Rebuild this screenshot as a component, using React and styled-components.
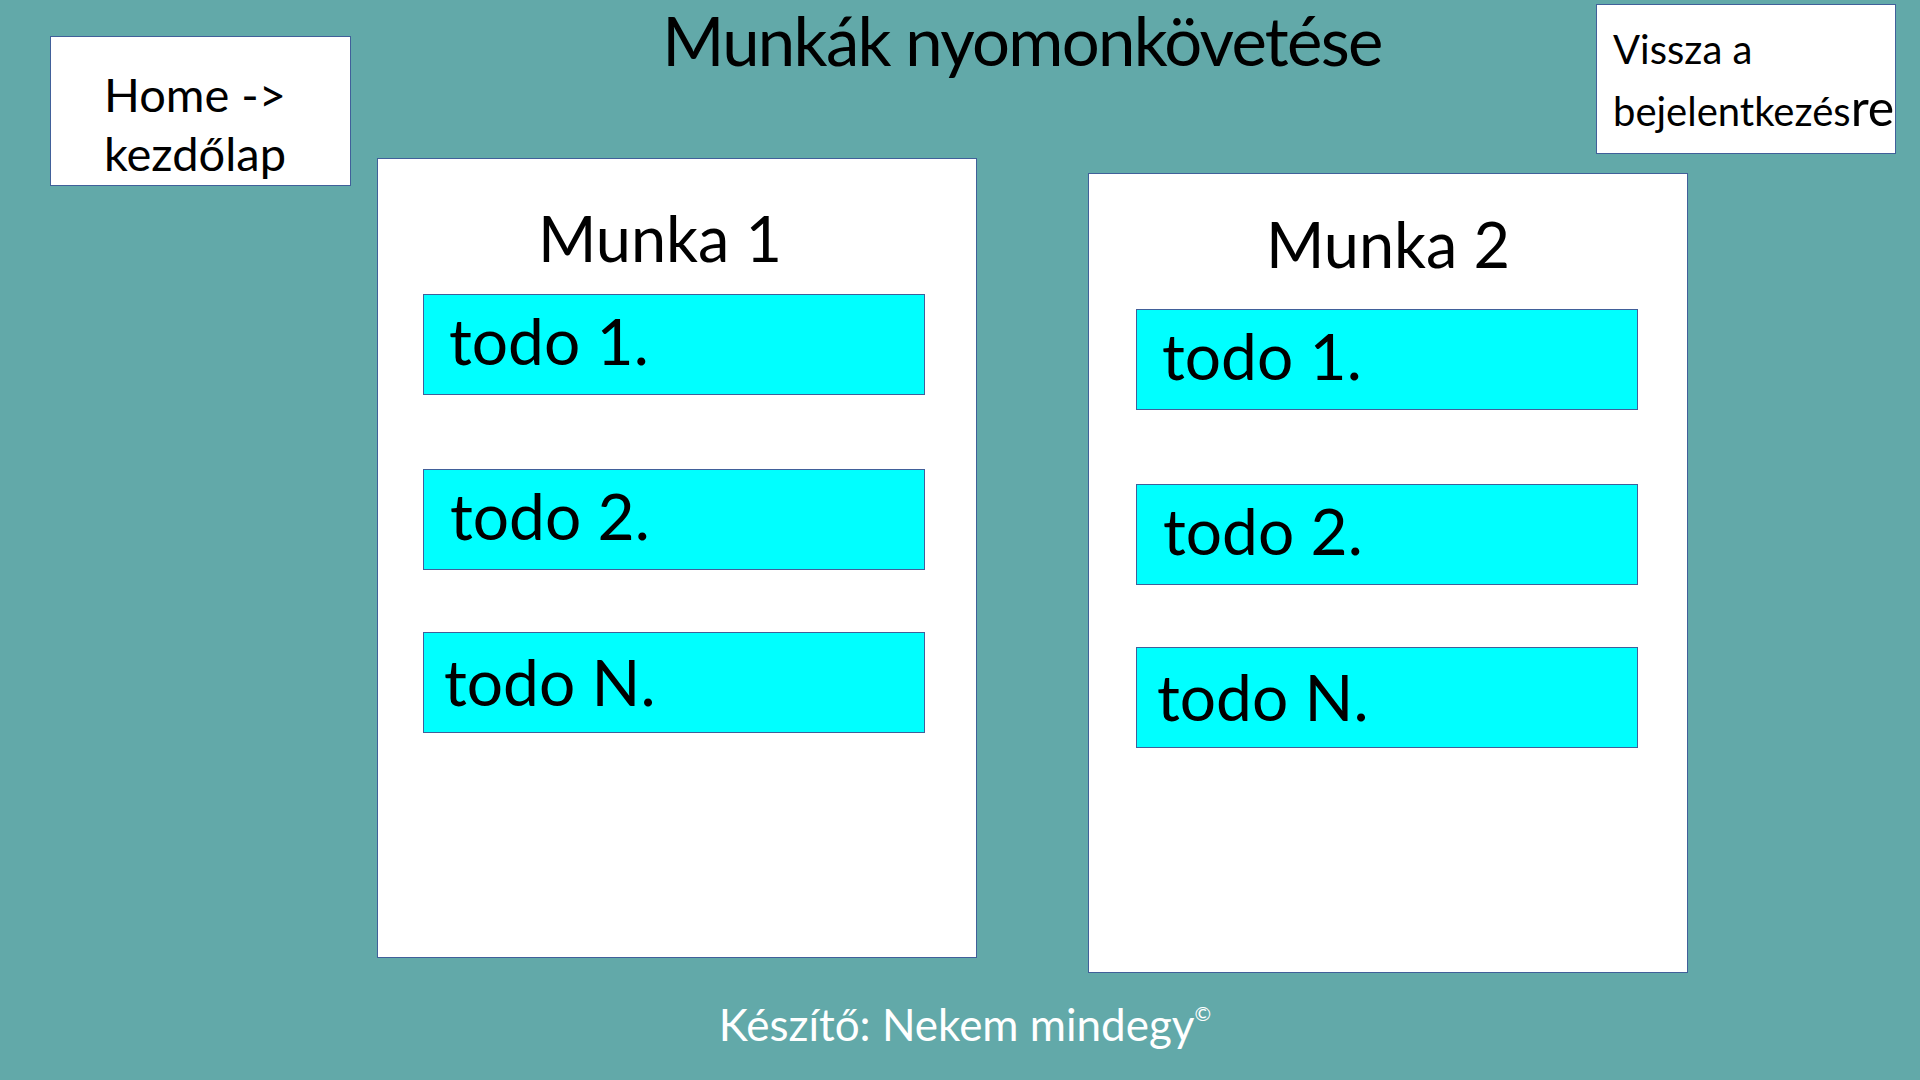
import React from 'react'
import styled, { createGlobalStyle } from 'styled-components'

const colors = {
  teal: '#62a9a9',
  border: '#41609a',
  cyan: '#00ffff',
  white: '#ffffff',
  black: '#000000',
}

const font = `Lato, "Open Sans", "Liberation Sans", sans-serif`

const GlobalStyle = createGlobalStyle`
  html, body {
    margin: 0;
    padding: 0;
    background: ${colors.teal};
    font-family: ${font};
    color: ${colors.black};
  }
  #root {
    width: 1920px;
    height: 1080px;
    overflow: hidden;
  }
`

const Page = styled.div`
  display: grid;
  grid-template-columns: 377px 1fr;
  grid-template-rows: auto 1fr;
  grid-template-areas:
    'side main'
    'foot foot';
  width: 1920px;
  height: 1080px;
  box-sizing: border-box;
`

const Side = styled.aside`
  grid-area: side;
  padding: 36px 0 0 50px;
`

const Main = styled.main`
  grid-area: main;
  display: flex;
  flex-direction: column;
`

const NavBox = styled.a`
  display: block;
  box-sizing: border-box;
  width: ${p => p.$width}px;
  height: 150px;
  background: ${colors.white};
  border: 1px solid ${colors.border};
  color: ${colors.black};
  text-decoration: none;
  font-size: ${p => p.$size}px;
  line-height: ${p => p.$lineHeight}px;
  padding: ${p => p.$pad};
  white-space: nowrap;
`

const Bigger = styled.span`
  font-size: 50px;
`

const Header = styled.header`
  display: flex;
  align-items: flex-start;
  height: 158px;
`

const Title = styled.h1`
  flex: 1;
  margin: 0;
  padding-left: 71px;
  text-align: center;
  font-weight: 400;
  font-size: 67px;
  letter-spacing: -1.7px;
  line-height: 1.2;
`

const Corner = styled.div`
  margin: 4px 24px 0 0;
`

const Cards = styled.section`
  display: flex;
  align-items: flex-start;
  gap: 111px;
`

const Card = styled.article`
  box-sizing: border-box;
  width: 600px;
  height: 800px;
  margin-top: ${p => p.$offset}px;
  background: ${colors.white};
  border: 1px solid ${colors.border};
  padding-left: ${p => p.$inset}px;
`

const CardTitle = styled.h2`
  box-sizing: border-box;
  height: 135px;
  margin: 0;
  margin-left: -${p => p.$inset}px;
  padding-top: ${p => p.$top}px;
  padding-right: ${p => p.$shift}px;
  text-align: center;
  font-weight: 400;
  font-size: 63px;
  line-height: 1.2;
`

const TodoList = styled.ul`
  list-style: none;
  margin: 0;
  padding: 0;
  display: flex;
  flex-direction: column;
`

const Todo = styled.li`
  box-sizing: border-box;
  width: 502px;
  height: 101px;
  margin-top: ${p => p.$space}px;
  background: ${colors.cyan};
  border: 1px solid ${colors.border};
  padding-left: ${p => p.$indent}px;
  font-size: 64px;
  line-height: ${p => p.$lineHeight}px;
`

const Footer = styled.footer`
  grid-area: foot;
  padding: 25px 0 0 10px;
  text-align: center;
  color: ${colors.white};
  font-size: 44px;
  line-height: 1.2;
`

const Copy = styled.sup`
  font-size: 20px;
  vertical-align: 20px;
  line-height: 0;
`

const jobs = [
  { name: 'Munka 1', offset: 0, top: 41, shift: 34, inset: 45 },
  { name: 'Munka 2', offset: 15, top: 32, shift: 0, inset: 47 },
]

const todos = [
  { label: 'todo 1.', space: 0, indent: 25, lineHeight: 91 },
  { label: 'todo 2.', space: 74, indent: 26, lineHeight: 91 },
  { label: 'todo N.', space: 62, indent: 20, lineHeight: 97 },
]

const JobCard = ({ job }) =>
  <Card $offset={job.offset} $inset={job.inset}>
    <CardTitle $top={job.top} $shift={job.shift} $inset={job.inset}>{job.name}</CardTitle>
    <TodoList>
      {todos.map(todo =>
        <Todo
          key={todo.label}
          $space={todo.space}
          $indent={todo.indent}
          $lineHeight={todo.lineHeight}
        >
          {todo.label}
        </Todo>
      )}
    </TodoList>
  </Card>

export default function App() {
  return (
    <>
      <GlobalStyle />
      <Page>
        <Side>
          <NavBox href="#" $width={301} $size={47} $lineHeight={59} $pad="28px 0 0 53px">
            Home -&gt;<br />kezdőlap
          </NavBox>
        </Side>
        <Main>
          <Header>
            <Title>Munkák nyomonkövetése</Title>
            <Corner>
              <NavBox href="#" $width={300} $size={40} $lineHeight={58} $pad="15px 0 0 16px">
                Vissza a<br />bejelentkezés<Bigger>re</Bigger>
              </NavBox>
            </Corner>
          </Header>
          <Cards>
            {jobs.map(job => <JobCard key={job.name} job={job} />)}
          </Cards>
        </Main>
        <Footer>
          Készítő: Nekem mindegy<Copy>©</Copy>
        </Footer>
      </Page>
    </>
  )
}
